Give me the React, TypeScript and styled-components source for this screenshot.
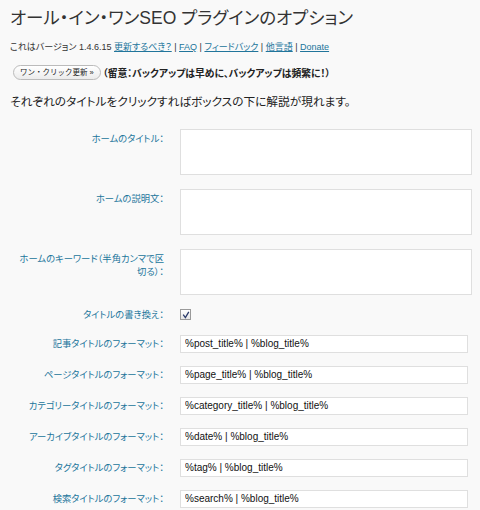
import React from 'react';
import styled, {createGlobalStyle} from "styled-components";

const GlobalStyle = createGlobalStyle`
  html, body {
    margin: 0;
    padding: 0;
    background: #f9f9f9;
  }
`

const jp = `"Liberation Sans", "Noto Sans CJK JP", sans-serif`

const textareaRows = [
    {label: 'ホームのタイトル：'},
    {label: 'ホームの説明文：'},
    {label: 'ホームのキーワード（半角カンマで区切る）：'},
]

const formatRows = [
    {label: '記事タイトルのフォーマット：', value: '%post_title% | %blog_title%'},
    {label: 'ページタイトルのフォーマット：', value: '%page_title% | %blog_title%'},
    {label: 'カテゴリータイトルのフォーマット：', value: '%category_title% | %blog_title%'},
    {label: 'アーカイブタイトルのフォーマット：', value: '%date% | %blog_title%'},
    {label: 'タグタイトルのフォーマット：', value: '%tag% | %blog_title%'},
    {label: '検索タイトルのフォーマット：', value: '%search% | %blog_title%'},
]

export default function App() {
    return (
        <Page>
            <GlobalStyle/>
            <Title>オール・イン・ワンSEO プラグインのオプション</Title>
            <Version>
                これはバージョン 1.4.6.15 <Link href="#">更新するべき？</Link> | <Link href="#">FAQ</Link> | <Link
                href="#">フィードバック</Link> | <Link href="#">他言語</Link> | <Link href="#">Donate</Link>
            </Version>
            <ButtonRow>
                <PillButton type={'button'}>ワン・クリック更新 »</PillButton>
                <Notice>（留意：バックアップは早めに、バックアップは頻繁に！）</Notice>
            </ButtonRow>
            <Intro>それぞれのタイトルをクリックすればボックスの下に解説が現れます。</Intro>
            <Form>
                {textareaRows.map(r => (
                    <Row key={r.label} $pad={7}>
                        <Label $top={4}>{r.label}</Label>
                        <Area/>
                    </Row>
                ))}
                <Row $pad={6}>
                    <Label $top={1}>タイトルの書き換え：</Label>
                    <Check>
                        <svg width="8" height="8" viewBox="0 0 8 8">
                            <path d="M1.2 3.6 L3.4 6.6 L6.8 0.8" fill="none" stroke="#2a3a6a" strokeWidth="1.3"/>
                        </svg>
                    </Check>
                </Row>
                {formatRows.map(r => (
                    <Row key={r.label} $pad={6.5}>
                        <Label $top={3}>{r.label}</Label>
                        <Field defaultValue={r.value}/>
                    </Row>
                ))}
            </Form>
        </Page>
    );
}

const Page = styled.div`
  width: 480px;
  height: 510px;
  overflow: hidden;
  box-sizing: border-box;
  padding: 0 10px;
  background: #f9f9f9;
  font-family: ${jp};
  color: #333;
  font-feature-settings: "palt";
`

const Title = styled.h2`
  margin: 0;
  padding: 6px 0 0;
  height: 32px;
  line-height: 24px;
  font-size: 17.5px;
  font-weight: normal;
  color: #333;
`

const Version = styled.p`
  margin: 0;
  height: 16px;
  line-height: 16px;
  padding-top: 1px;
  font-size: 9px;
  color: #333;
`

const Link = styled.a`
  color: #21759b;
  text-decoration: underline;
`

const ButtonRow = styled.div`
  display: flex;
  align-items: center;
  gap: 2px;
  margin-top: 10px;
  padding-left: 3px;
  height: 15px;
`

const PillButton = styled.button`
  height: 15px;
  padding: 0 6px;
  border: 1px solid #bbb;
  border-radius: 10px;
  background: linear-gradient(#fff, #ececec);
  font-family: ${jp};
  font-size: 7.5px;
  line-height: 13px;
  color: #222;
`

const Notice = styled.span`
  font-size: 9.8px;
  font-weight: bold;
  color: #222;
`

const Intro = styled.p`
  margin: 13px 0 0;
  line-height: 18px;
  font-size: 11.7px;
  color: #222;
`

const Form = styled.div`
  margin-top: 11px;
`

const Row = styled.div<{ $pad: number }>`
  display: grid;
  grid-template-columns: 156px 1fr;
  column-gap: 14px;
  padding: ${p => p.$pad}px 0;
  align-items: start;
`

const Label = styled.div<{ $top: number }>`
  padding: ${p => p.$top}px 2px 0 8px;
  text-align: right;
  font-size: 9.3px;
  line-height: 13px;
  color: #21759b;
`

const Area = styled.textarea`
  display: block;
  box-sizing: border-box;
  width: 292px;
  height: 46px;
  margin: 0;
  border: 1px solid #dfdfdf;
  background: #fff;
  resize: none;
`

const Field = styled.input`
  display: block;
  box-sizing: border-box;
  width: 288px;
  height: 18px;
  margin: 0;
  padding: 0 4px;
  border: 1px solid #dfdfdf;
  background: #fff;
  font-family: "Liberation Sans", Arial, sans-serif;
  font-size: 10px;
  color: #111;
`

const Check = styled.span`
  display: flex;
  align-items: center;
  justify-content: center;
  box-sizing: border-box;
  width: 11px;
  height: 11px;
  margin-top: 1px;
  border: 1px solid #9a9a9a;
  background: linear-gradient(#fff, #e6e6e6);
`
